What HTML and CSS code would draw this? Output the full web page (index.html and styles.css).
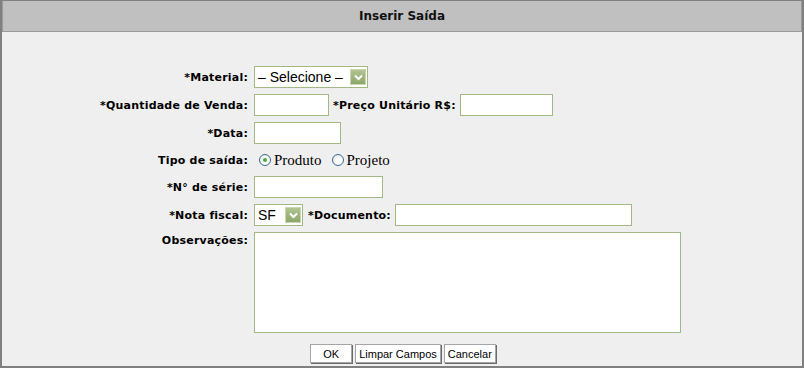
FILE: index.html
```html
<html lang="pt">
<head>
  <meta charset="UTF-8" />
  <title>Inserir Saída</title>
  <link rel="stylesheet" href="styles.css">
</head>
<body>
  <div class="painel">
    <!-- Cabeçalho do painel -->
    <div class="titulo">Inserir Saída</div>

    <form class="formulario">
      <label class="rotulo">*Material:</label>
      <div class="campo">
        <div class="combo combo-material">
          <span class="combo-texto">– Selecione –</span>
          <span class="combo-seta"><svg width="9" height="7" viewBox="0 0 9 7"><path d="M1 1.5 L4.5 5 L8 1.5" fill="none" stroke="#fff" stroke-width="2"/></svg></span>
        </div>
      </div>

      <label class="rotulo">*Quantidade de Venda:</label>
      <div class="campo">
        <input type="text" class="caixa caixa-qtd" />
        <label class="rotulo-inline">*Preço Unitário R$:</label>
        <input type="text" class="caixa caixa-preco" />
      </div>

      <label class="rotulo">*Data:</label>
      <div class="campo">
        <input type="text" class="caixa caixa-data" />
      </div>

      <label class="rotulo linha-radio">Tipo de saída:</label>
      <div class="campo linha-radio">
        <span class="radio marcado"></span><span class="radio-texto">Produto</span>
        <span class="radio segundo"></span><span class="radio-texto">Projeto</span>
      </div>

      <label class="rotulo">*N° de série:</label>
      <div class="campo">
        <input type="text" class="caixa caixa-serie" />
      </div>

      <label class="rotulo">*Nota fiscal:</label>
      <div class="campo">
        <div class="combo combo-nota">
          <span class="combo-texto">SF</span>
          <span class="combo-seta"><svg width="9" height="7" viewBox="0 0 9 7"><path d="M1 1.5 L4.5 5 L8 1.5" fill="none" stroke="#fff" stroke-width="2"/></svg></span>
        </div>
        <label class="rotulo-inline">*Documento:</label>
        <input type="text" class="caixa caixa-doc" />
      </div>

      <label class="rotulo rotulo-topo">Observações:</label>
      <div class="campo campo-topo">
        <textarea class="obs"></textarea>
      </div>
    </form>

    <!-- Botões -->
    <div class="botoes">
      <button class="botao botao-ok">OK</button>
      <button class="botao">Limpar Campos</button>
      <button class="botao">Cancelar</button>
    </div>
  </div>
</body>
</html>
```

FILE: styles.css
```css
/* Estilos gerais */
body {
  margin: 0;
  padding: 0;
  background: #efefef;
  font-family: "DejaVu Sans", Verdana, sans-serif;
}
.painel {
  width: 804px;
  height: 368px;
  box-sizing: border-box;
  background: #efefef;
  border: 2px solid #808080;
  border-top-width: 1px;
}
.titulo {
  height: 31px;
  box-sizing: border-box;
  background: #c0c0c0;
  border: 1px solid #9a9a9a;
  border-top: none;
  text-align: center;
  font-weight: bold;
  font-size: 12px;
  line-height: 31px;
  color: #111;
}
/* Grade do formulário: rótulos à direita, campos à esquerda */
.formulario {
  display: grid;
  grid-template-columns: 246px 1fr;
  column-gap: 6px;
  row-gap: 6px;
  margin: 0;
  padding-top: 34px;
}
.rotulo {
  height: 22px;
  display: flex;
  align-items: center;
  justify-content: flex-end;
  font-size: 11px;
  font-weight: bold;
  color: #000;
  letter-spacing: 0.2px;
}
.rotulo-inline {
  font-size: 11px;
  font-weight: bold;
  color: #000;
  letter-spacing: 0.2px;
}
.campo {
  height: 22px;
  display: flex;
  align-items: center;
  gap: 4px;
}
.linha-radio {
  height: 20px;
}
.rotulo-topo {
  align-items: flex-start;
  padding-top: 2px;
}
.campo-topo {
  height: auto;
  align-items: flex-start;
}
/* Caixas de texto */
.caixa {
  height: 22px;
  box-sizing: border-box;
  border: 1px solid #a2b984;
  background: #fff;
  padding: 0 3px;
  margin: 0;
  outline: none;
}
.caixa-qtd { width: 75px; }
.caixa-preco { width: 93px; }
.caixa-data { width: 87px; }
.caixa-serie { width: 129px; }
.caixa-doc { width: 237px; }
.obs {
  width: 427px;
  height: 101px;
  box-sizing: border-box;
  border: 1px solid #a2b984;
  background: #fff;
  margin: 0;
  resize: none;
  outline: none;
}
/* Combos */
.combo {
  height: 22px;
  box-sizing: border-box;
  border: 1px solid #a2b984;
  background: #fff;
  display: flex;
  align-items: center;
  justify-content: space-between;
  padding: 0 1px 0 3px;
}
.combo-material { width: 114px; }
.combo-nota { width: 49px; margin-right: 1px; }
.combo-texto {
  font-family: "Liberation Sans", Arial, sans-serif;
  font-size: 14px;
  color: #000;
}
.combo-seta {
  width: 16px;
  height: 16px;
  box-sizing: border-box;
  border: 1px solid #c8d6b4;
  background: linear-gradient(#b0c48f, #8ea66a);
  display: flex;
  align-items: center;
  justify-content: center;
}
/* Botões de rádio */
.radio {
  width: 12px;
  height: 12px;
  box-sizing: border-box;
  border: 1px solid #3c6a98;
  border-radius: 50%;
  background: radial-gradient(circle at 60% 60%, #fff 30%, #dcdcd6 100%);
  margin-left: 5px;
  position: relative;
}
.radio.segundo {
  margin-left: 6px;
}
.radio.marcado::after {
  content: "";
  position: absolute;
  left: 3px;
  top: 3px;
  width: 4px;
  height: 4px;
  border-radius: 50%;
  background: #3fb03f;
}
.radio-texto {
  font-family: "Liberation Serif", "Times New Roman", serif;
  font-size: 15px;
  color: #000;
  margin-left: -1px;
}
/* Linha de botões */
.botoes {
  display: flex;
  justify-content: center;
  gap: 3px;
  margin-top: 11px;
  padding-left: 2px;
}
.botao {
  height: 19px;
  box-sizing: border-box;
  background: #fff;
  border: 1px solid #a5a5a5;
  box-shadow: 1px 1px 0 #6a6a6a;
  font-family: "Liberation Sans", Arial, sans-serif;
  font-size: 11px;
  letter-spacing: 0;
  padding: 0 3px;
  color: #000;
}
.botao-ok {
  width: 42px;
}
```
